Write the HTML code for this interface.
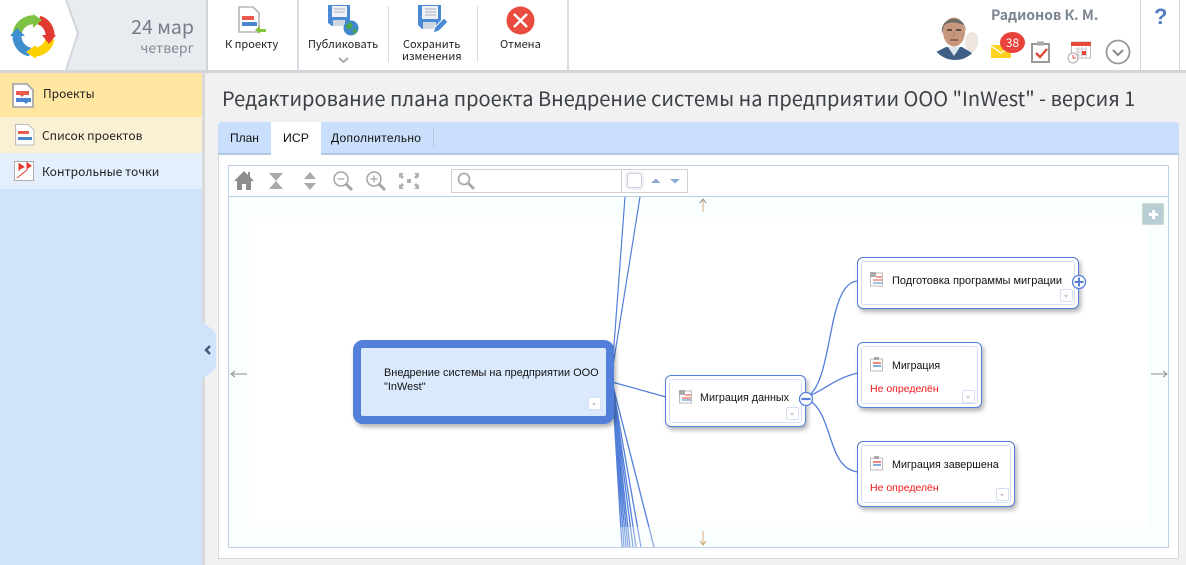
<!DOCTYPE html>
<html><head><meta charset="utf-8">
<style>
html,body{margin:0;padding:0;width:1186px;height:565px;overflow:hidden;background:#f1f1f1}
body{position:relative;font-family:"Noto Sans CJK SC","Liberation Sans",sans-serif;color:#222}
.a{position:absolute}
.t{position:absolute;white-space:nowrap;line-height:1}
.l{font-family:"Liberation Sans",sans-serif}
.node{position:absolute;box-sizing:border-box;background:#fff;border:1.5px solid #527fd9;border-radius:6px;box-shadow:2px 3px 5px rgba(0,0,0,.3)}
.node i{position:absolute;left:3px;top:3px;right:3px;bottom:3px;border:1px solid #d4e3fb;border-radius:3px}
.dd{position:absolute;width:11px;height:11px;border:1px solid #d5e0f5;border-radius:2px;background:#fff}
.dd:after{content:"";position:absolute;left:3px;top:5px;border:2.5px solid transparent;border-top:3px solid #c8c8c8}
.red{color:#f01818;font-size:10.5px;font-family:"Liberation Sans",sans-serif}
.nt{font-size:11px;font-family:"Liberation Sans",sans-serif;color:#111}
</style></head><body>

<!-- top bar -->
<div class="a" style="left:0;top:0;width:1186px;height:70px;background:#fff"></div>
<div class="a" style="left:0;top:70px;width:1186px;height:3px;background:#d2d5da"></div>
<svg class="a" style="left:0;top:0" width="208" height="70">
<polygon points="66,0 207,0 207,70 66,70 78,33" fill="#e8ebf0"/>
<polyline points="66,0 78,33 66,70" fill="none" stroke="#d2d5da" stroke-width="2"/>
<line x1="207" y1="0" x2="207" y2="70" stroke="#d2d5da" stroke-width="2"/>
</svg>
<!-- logo -->
<svg class="a" style="left:9px;top:12px" width="48" height="46" viewBox="0 0 48 46">
<g fill="none" stroke-width="9">
<path d="M8 22 A16 16 0 0 1 26 7" stroke="#7dc243" transform="translate(0,1)"/>
<path d="M30 8 A16 16 0 0 1 41 24" stroke="#e23a30"/>
<path d="M41 27 A16 16 0 0 1 24 40" stroke="#fdd000"/>
<path d="M21 40 A16 16 0 0 1 8 24" stroke="#3d8fd0"/>
</g>
<polygon points="24,2 24,16 33,8" fill="#7dc243"/>
<polygon points="33,23 47,23 40,32" fill="#e23a30"/>
<polygon points="27,33 27,47 17,40" fill="#fdd000"/>
<polygon points="1,24 16,24 8,16" fill="#3d8fd0"/>
</svg>
<div class="t" style="right:992px;top:16px;font-size:19.5px;color:#757d88">24 мар</div>
<div class="t" style="right:992px;top:41px;font-size:14px;color:#868c95">четверг</div>

<!-- toolbar icons -->
<svg class="a" style="left:238px;top:6px" width="30" height="28" viewBox="0 0 30 28">
<path d="M1 1H15L21 7V26H1Z" fill="#fff" stroke="#b5b5b5" stroke-width="1.600"/>
<rect x="4" y="10" width="12" height="4" fill="#ea5a4e"/><rect x="4" y="16" width="15" height="4" fill="#4a86d0"/>
<path d="M17 24L22 20V23H28V26H22V28Z" fill="#86c440"/>
</svg>
<div class="t" style="left:225px;top:39px;font-size:11px;color:#222">К проекту</div>
<div class="a" style="left:297px;top:0;width:2px;height:70px;background:#d9dce0"></div>

<svg class="a" style="left:327px;top:4px" width="33" height="32" viewBox="0 0 33 32">
<path d="M1 1H23V22H5L1 19Z" fill="#4a89d3"/><rect x="5" y="2" width="15" height="11" fill="#eef2f7"/>
<path d="M7 5H18M7 8H18" stroke="#aab" stroke-width="1"/><rect x="6" y="16" width="12" height="6" fill="#cfd8e2"/>
<circle cx="24" cy="24" r="7.500" fill="#3f88cc"/><path d="M19 21L24 18L26 22L23 25L20 25ZM26 26L30 24L29 29L26 30Z" fill="#4aa84a"/>
</svg>
<div class="t" style="left:308px;top:39px;font-size:11px">Публиковать</div>
<svg class="a" style="left:338px;top:57px" width="12" height="8"><path d="M1 1L5.500 5L10 1" fill="none" stroke="#aaa" stroke-width="2"/></svg>
<div class="a" style="left:388px;top:6px;width:1px;height:56px;background:#dcdcdc"></div>

<svg class="a" style="left:417px;top:4px" width="32" height="32" viewBox="0 0 32 32">
<path d="M1 1H24V25H5L1 21Z" fill="#4a89d3"/><rect x="5" y="2" width="16" height="13" fill="#eef2f7"/>
<path d="M8 5H19M8 8H19M8 11H19" stroke="#aab" stroke-width="1"/><rect x="6" y="18" width="13" height="7" fill="#cfd8e2"/>
<path d="M16 29L18 23L27 14L31 18L22 27Z" fill="#4a89d3" stroke="#fff" stroke-width="1"/>
</svg>
<div class="t" style="left:403px;top:39px;font-size:11px">Сохранить</div>
<div class="t" style="left:402px;top:51px;font-size:11px">изменения</div>
<div class="a" style="left:477px;top:6px;width:1px;height:56px;background:#dcdcdc"></div>

<svg class="a" style="left:506px;top:6px" width="30" height="30"><circle cx="14.500" cy="14.500" r="14" fill="#ea4b3f"/><path d="M8 8L21 21M21 8L8 21" stroke="#fff" stroke-width="2.400"/></svg>
<div class="t" style="left:500px;top:39px;font-size:11px">Отмена</div>
<div class="a" style="left:567px;top:0;width:2px;height:70px;background:#d9dce0"></div>

<!-- user -->
<svg class="a" style="left:932px;top:10px" width="46" height="50" viewBox="0 0 46 50">
<defs><clipPath id="c"><circle cx="23" cy="25" r="25"/></clipPath></defs>
<g clip-path="url(#c)"><rect width="46" height="50" fill="#fff"/>
<ellipse cx="40" cy="32" rx="7" ry="10" fill="#ece6de"/>
<path d="M2 50V43L14 37H30L40 43V50Z" fill="#3f5f86"/><path d="M16 37L22 46L28 37Z" fill="#dfe5ec"/>
<ellipse cx="22" cy="22" rx="11" ry="14.500" fill="#c8987e"/>
<path d="M10 24C7 5 34 3 34 22L32 15C25 12 15 11 12 16Z" fill="#6c6966"/>
<path d="M15 20H20M24 20H29" stroke="#3f302a" stroke-width="1.500"/><path d="M18 30H26" stroke="#7f5044" stroke-width="1.500"/><path d="M22 21V27" stroke="#a87c66"/></g>
</svg>
<div class="t" style="left:991px;top:8px;font-size:14px;font-weight:700;color:#7a8590">Радионов К. М.</div>
<svg class="a" style="left:991px;top:32px" width="25" height="26"><path d="M0 13H20V26H0Z" fill="#ffd21f"/><path d="M0 14L10 21L20 14" fill="none" stroke="#fff" stroke-width="1.200"/></svg>
<div class="a" style="left:1000px;top:32px;width:25px;height:21px;border-radius:50%;background:#e8423a;color:#fff;font-size:12px;line-height:21px;text-align:center">38</div>
<svg class="a" style="left:1030px;top:40px" width="22" height="24"><path d="M2 4H19V22H2Z" fill="#fff" stroke="#9a9a9a" stroke-width="2"/><rect x="7" y="1.500" width="7" height="4" fill="#aaa"/><path d="M6 13L10 17L17 9" fill="none" stroke="#e04a3c" stroke-width="2.400"/></svg>
<svg class="a" style="left:1066px;top:41px" width="27" height="23"><rect x="5.500" y="1" width="19" height="16" fill="#fff" stroke="#bbb"/><rect x="5" y="1" width="20" height="4" fill="#e8483c"/><path d="M9 8H21M9 11H21M9 14H21M12 6V16M16 6V16M20 6V16" stroke="#c9c9c9" stroke-width="1"/><rect x="16" y="10" width="4" height="4" fill="#e8483c"/><circle cx="7" cy="17" r="5" fill="#fff" stroke="#aaa"/><path d="M7 14V17H10" fill="none" stroke="#e8483c"/></svg>
<svg class="a" style="left:1105px;top:39px" width="26" height="26"><circle cx="13" cy="13" r="11.500" fill="#fff" stroke="#999" stroke-width="1.800"/><path d="M8 11L13 16L18 11" fill="none" stroke="#888" stroke-width="2"/></svg>
<div class="a" style="left:1140px;top:0;width:1px;height:70px;background:#d2d5da"></div>
<div class="a" style="left:1179px;top:0;width:1px;height:70px;background:#d2d5da"></div>
<div class="t l" style="left:1154px;top:6px;font-size:22px;font-weight:700;color:#4f7fc0">?</div>

<!-- sidebar -->
<div class="a" style="left:0;top:73px;width:202px;height:492px;background:#d0e3fb"></div>
<div class="a" style="left:0;top:73px;width:202px;height:44px;background:#ffe6a1"></div>
<div class="a" style="left:0;top:117px;width:202px;height:36px;background:#faf0d4"></div>
<div class="a" style="left:0;top:153px;width:202px;height:36px;background:#e3effc"></div>
<div class="a" style="left:202px;top:73px;width:3px;height:492px;background:#d9d9d9"></div>
<svg class="a" style="left:12px;top:83px" width="23" height="25"><path d="M1 1H15L21 7V24H1Z" fill="#fff" stroke="#aaa" stroke-width="1.800"/><rect x="4" y="8" width="13" height="4" fill="#ea5a4e"/><path d="M8 12H12L10 14Z" fill="#ea5a4e"/><rect x="4" y="15" width="15" height="4" fill="#4a86d0"/><path d="M12 19H16L14 21Z" fill="#4a86d0"/></svg>
<div class="t" style="left:43px;top:88px;font-size:12px;color:#222">Проекты</div>
<svg class="a" style="left:15px;top:124px" width="20" height="22"><path d="M.5 .5H13L19 6V21H.5Z" fill="#fff" stroke="#bbb"/><rect x="3" y="7" width="11" height="3" fill="#ea5a4e"/><rect x="3" y="13" width="14" height="3" fill="#4a86d0"/></svg>
<div class="t" style="left:42px;top:130px;font-size:12px;color:#222">Список проектов</div>
<svg class="a" style="left:14px;top:161px" width="20" height="20"><rect x=".5" y=".5" width="19" height="19" fill="#fff" stroke="#aaa"/><path d="M5 2L11 6L5 9Z M13 1L18 5L13 8Z" fill="#e03a2c"/><path d="M5 2V10M13 1V9M3 17L13 9" stroke="#e03a2c"/></svg>
<div class="t" style="left:42px;top:166px;font-size:12px;color:#222">Контрольные точки</div>
<!-- collapse tab -->
<svg class="a" style="left:202px;top:322px" width="16" height="58"><path d="M0 0L10 7Q14 10 14 15V42Q14 46 10 50L0 57Z" fill="#d0e3fb"/><path d="M8 24L4 28L8 32" fill="none" stroke="#3f5a78" stroke-width="2.400"/></svg>

<!-- title -->
<div class="t" id="title" style="left:222px;top:88px;font-size:20px;color:#3c4047">Редактирование плана проекта Внедрение системы на предприятии ООО "InWest" - версия 1</div>

<!-- panel -->
<div class="a" style="left:218px;top:122px;width:961px;height:437px;box-sizing:border-box;background:#fff;border:1px solid #d6d9de;border-radius:4px 4px 0 0"></div>
<div class="a" style="left:218px;top:122px;width:961px;height:33px;background:#c9dffb;border-bottom:2px solid #b3c8e4;box-sizing:border-box;border-radius:4px 4px 0 0"></div>
<div class="a" style="left:271px;top:122px;width:50px;height:33px;background:#fff"></div>
<div class="t l" style="left:230px;top:132px;font-size:12px;color:#111">План</div>
<div class="t l" style="left:283px;top:132px;font-size:12.300px;color:#111">ИСР</div>
<div class="t l" style="left:331px;top:132px;font-size:12px;letter-spacing:.3px;color:#111">Дополнительно</div>
<div class="a" style="left:433px;top:127px;width:1px;height:20px;background:#b5c6dc"></div>

<!-- tool strip & canvas -->
<div class="a" style="left:228px;top:165px;width:941px;height:383px;box-sizing:border-box;border:1px solid #bdd0e6;background:#fff"></div>
<div class="a" style="left:229px;top:196px;width:939px;height:1px;background:#b9d0ec"></div>
<div class="a" style="left:229px;top:197px;width:939px;height:350px;background:#f8fffe"></div>
<div class="a" style="left:249px;top:217px;width:899px;height:310px;background:#fff"></div>

<svg class="a" style="left:233px;top:170px" width="190" height="22" fill="#a0a0a0">
<path d="M11 1L1 11H4V20H9V14H13V20H18V11H21L17 7V2H15V5Z" fill="#8d8d8d"/>
<path d="M36 3H50L43 11L50 19H36L43 11Z" fill="#aaa"/>
<path d="M77 2L83 9H71ZM71 13H83L77 20Z" fill="#aaa"/>
<g fill="none" stroke="#a5a5a5"><circle cx="108" cy="9" r="7" stroke-width="1.500"/><path d="M104.500 9H111.500" stroke-width="1.200"/><path d="M113 14L119 20" stroke-width="3"/>
<circle cx="141" cy="9" r="7" stroke-width="1.500"/><path d="M137.500 9H144.500M141 5.500V12.500" stroke-width="1.200"/><path d="M146 14L152 20" stroke-width="3"/></g>
<path d="M166 3H171L169 5L171 7L169 9L167 7L166 8ZM186 3H181L183 5L181 7L183 9L185 7L186 8ZM166 19H171L169 17L171 15L169 13L167 15L166 14ZM186 19H181L183 17L181 15L183 13L185 15L186 14Z" fill="#b0b0b0"/><rect x="174" y="9" width="4" height="4" fill="#b0b0b0"/>
</svg>

<div class="a" style="left:451px;top:169px;width:237px;height:24px;box-sizing:border-box;border:1px solid #d0d0d0;background:#fff"></div>
<div class="a" style="left:621px;top:169px;width:1px;height:24px;background:#d0d0d0"></div>
<svg class="a" style="left:456px;top:171px" width="20" height="20"><circle cx="8" cy="8" r="5.500" fill="none" stroke="#aaa" stroke-width="1.800"/><path d="M12 12L18 18" stroke="#aaa" stroke-width="2.800"/></svg>
<div class="a" style="left:627px;top:173px;width:13px;height:13px;border:1px solid #ccd;border-radius:3px;background:#fff;box-shadow:0 0 0 2px #eef1f5"></div>
<svg class="a" style="left:650px;top:176px" width="32" height="10"><path d="M1 7L6 2.500L10.500 7Z" fill="#8aa9d6"/><path d="M20 3H30L25 7.500Z" fill="#8aa9d6"/></svg>

<!-- connections and arrows -->
<svg class="a" style="left:229px;top:197px" width="939" height="350" viewBox="229 197 939 350">
<g fill="none" stroke="#527fd9" stroke-width="1.200">
<path d="M612 372L625 197M612 372L640 197"/>
<path d="M612 382L666 397"/>
<g stroke-width="1.300">
<path d="M612 382L622 547M612 382L624 547M612 382L626 547M612 382L628 547M612 382L630 547M612 382L633 547M612 382L636 547M612 382L641 547M612 382L654 547"/>
</g>
<path d="M805 398C835 385 825 282 858 281M805 398C825 390 835 378 858 373M805 398C835 410 825 468 858 472" stroke-width="1.300"/>
</g>
<g stroke-width="1.100" fill="none">
<path d="M703 212V199" stroke="#d8b98a"/><path d="M700 203L703 199L706 203" stroke="#999"/>
<path d="M703 531V545" stroke="#d8b98a"/><path d="M700 541L703 545L706 541" stroke="#c9a66f"/>
<path d="M231 374H247" stroke="#999"/><path d="M235 371L231 374L235 377" stroke="#999"/>
<path d="M1151 374H1167" stroke="#999"/><path d="M1163 371L1167 374L1163 377" stroke="#999"/>
</g>
<rect x="620" y="527" width="38" height="20" fill="#fff" opacity=".35"/>
</svg>
<div class="a" style="left:1142px;top:203px;width:22px;height:22px;background:#b8cdd4;border:1px solid #ccd9c8;box-sizing:border-box;border-radius:2px;color:#fff"></div>
<svg class="a" style="left:1142px;top:203px" width="23" height="23"><path d="M11.500 7V16M7 11.500H16" stroke="#fff" stroke-width="3"/></svg>

<!-- root node -->
<div class="a" style="left:353px;top:340px;width:261px;height:84px;box-sizing:border-box;border:8px solid #527fd9;border-radius:10px;background:#dbe9fd;box-shadow:2px 3px 5px rgba(0,0,0,.3)"></div>
<div class="t nt" style="left:384px;top:368px;font-size:10.950px">Внедрение системы на предприятии ООО</div>
<div class="t nt" style="left:384px;top:382px;font-size:10.950px">"InWest"</div>
<div class="dd" style="left:588px;top:397px"></div>

<!-- node: Миграция данных -->
<div class="node" style="left:665px;top:375px;width:141px;height:52px"><i></i></div>
<svg class="a ic" style="left:679px;top:390px" width="14" height="14"><rect x=".5" y="1" width="12" height="12" fill="#fff" stroke="#bbb"/><rect x="0" y="0" width="6" height="5" fill="#aaa"/><path d="M6 5H12M3 8H12" stroke="#e0463a"/><path d="M3 10H12" stroke="#3f86cc"/></svg>
<div class="t nt" style="left:700px;top:393px;font-size:10.750px">Миграция данных</div>
<div class="dd" style="left:786px;top:407px"></div>
<svg class="a" style="left:798px;top:391px" width="16" height="16"><circle cx="8" cy="8" r="6.500" fill="#fff" stroke="#527fd9" stroke-width="1.300"/><path d="M3.500 8H12.500" stroke="#527fd9" stroke-width="2.200"/></svg>

<!-- node: Подготовка -->
<div class="node" style="left:857px;top:257px;width:222px;height:52px"><i></i></div>
<svg class="a" style="left:870px;top:272px" width="14" height="15"><rect x=".5" y="1" width="12" height="13" fill="#fff" stroke="#bbb"/><rect x="0" y="0" width="6" height="5" fill="#aaa"/><path d="M6 5H12M3 8H12" stroke="#e0463a"/><path d="M3 11H12" stroke="#3f86cc"/></svg>
<div class="t nt" style="left:892px;top:276px">Подготовка программы миграции</div>
<div class="dd" style="left:1060px;top:289px"></div>
<svg class="a" style="left:1071px;top:274px" width="16" height="16"><circle cx="8" cy="8" r="6.500" fill="#fff" stroke="#527fd9" stroke-width="1.300"/><path d="M3.500 8H12.500M8 3.500V12.500" stroke="#527fd9" stroke-width="2"/></svg>

<!-- node: Миграция -->
<div class="node" style="left:857px;top:342px;width:125px;height:66px"><i></i></div>
<svg class="a" style="left:870px;top:357px" width="14" height="15"><rect x=".5" y="2" width="12" height="12" fill="#fff" stroke="#bbb"/><rect x="4" y="0" width="5" height="3" fill="#aaa"/><path d="M3 6H11" stroke="#e0463a" stroke-width="1.300"/><path d="M3 9H11" stroke="#3f86cc" stroke-width="1.300"/></svg>
<div class="t nt" style="left:892px;top:361px;font-size:10.600px">Миграция</div>
<div class="t red" style="left:870px;top:384px">Не определён</div>
<div class="dd" style="left:962px;top:390px"></div>

<!-- node: Миграция завершена -->
<div class="node" style="left:857px;top:441px;width:158px;height:66px"><i></i></div>
<svg class="a" style="left:870px;top:456px" width="14" height="15"><rect x=".5" y="2" width="12" height="12" fill="#fff" stroke="#bbb"/><rect x="4" y="0" width="5" height="3" fill="#aaa"/><path d="M3 6H11" stroke="#e0463a" stroke-width="1.300"/><path d="M3 9H11" stroke="#3f86cc" stroke-width="1.300"/></svg>
<div class="t nt" style="left:892px;top:460px;font-size:10.750px">Миграция завершена</div>
<div class="t red" style="left:870px;top:483px">Не определён</div>
<div class="dd" style="left:996px;top:488px"></div>

</body></html>
